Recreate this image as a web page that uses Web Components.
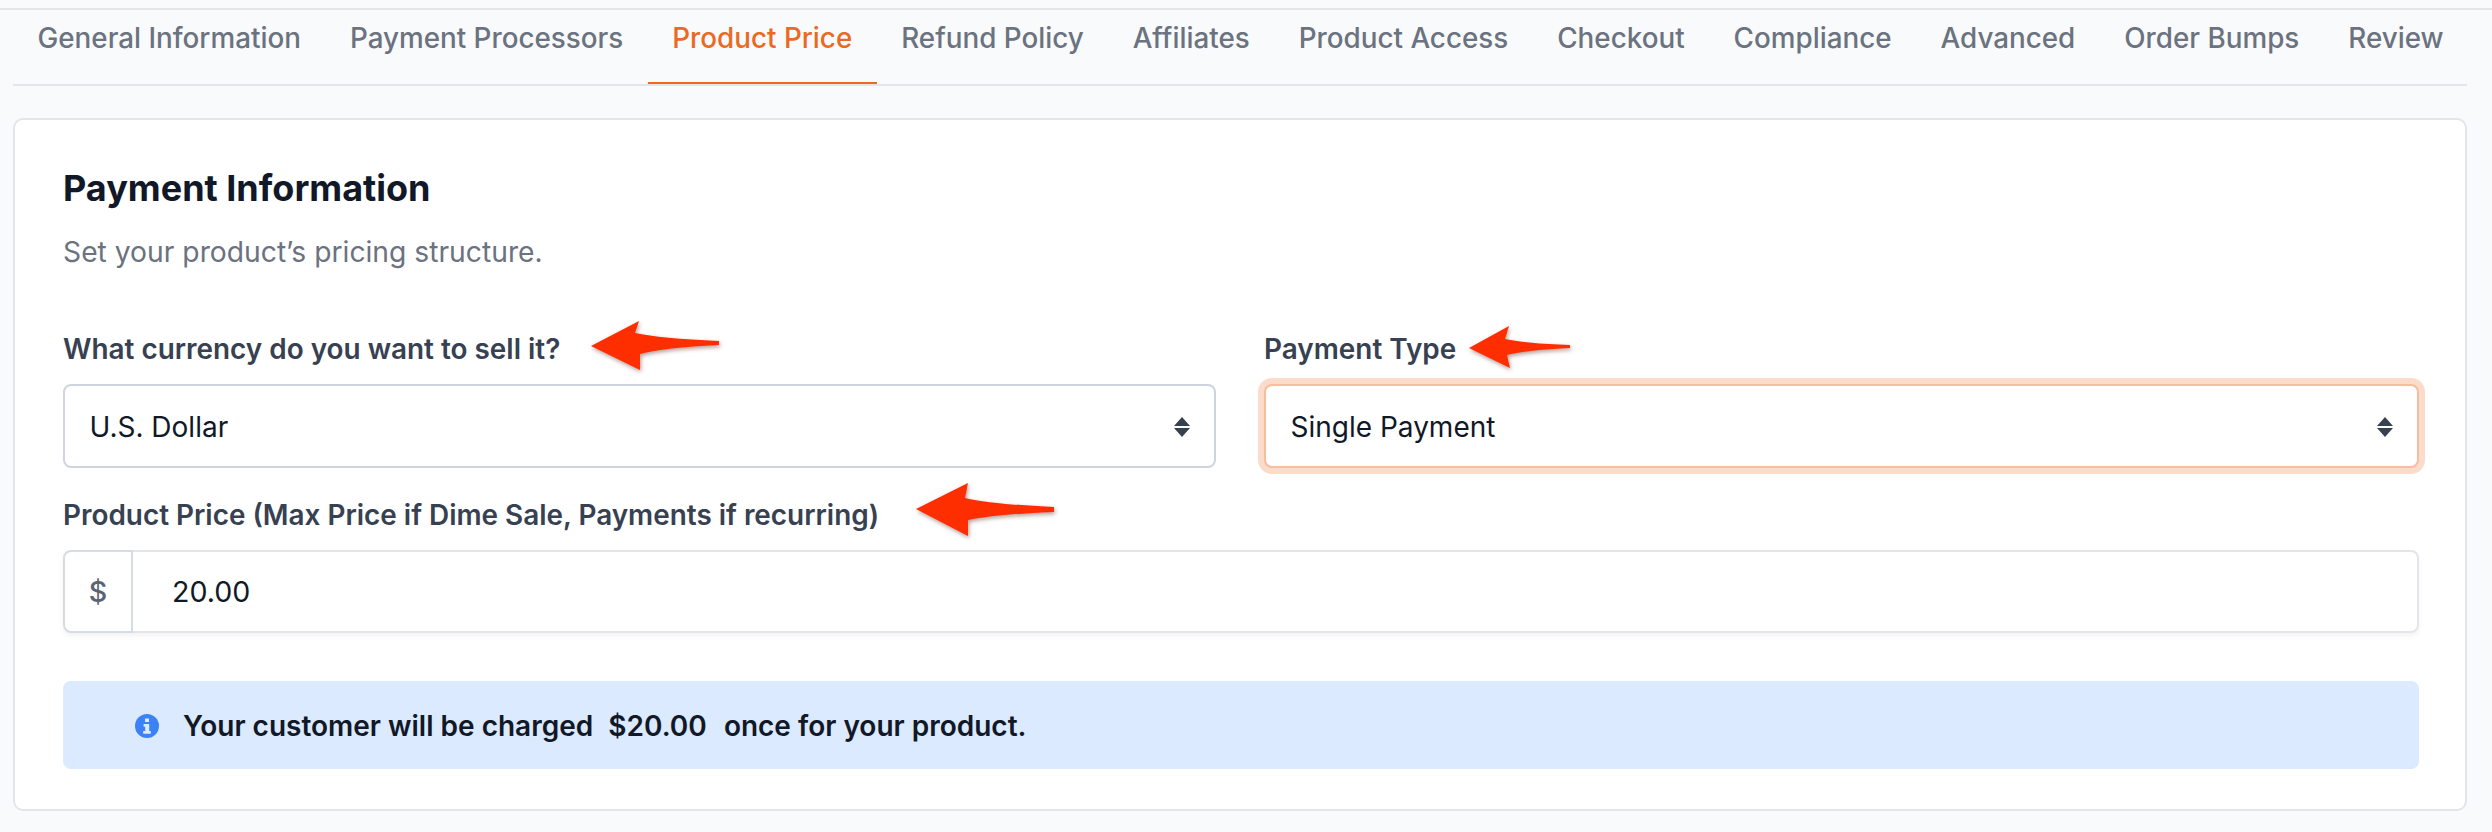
<!DOCTYPE html>
<html>
<head>
<meta charset="utf-8">
<title>Payment Information</title>
<style>
    html, body { margin: 0; background: #f9fafb; }
    body { font-family: Inter, "Liberation Sans", sans-serif; }
    .amount { margin: 0 3px 0 1px; }
</style>
</head>
<body>
<wizard-page>
    <wizard-tabs>
        <wizard-tab>General Information</wizard-tab>
        <wizard-tab>Payment Processors</wizard-tab>
        <wizard-tab active>Product Price</wizard-tab>
        <wizard-tab>Refund Policy</wizard-tab>
        <wizard-tab>Affiliates</wizard-tab>
        <wizard-tab>Product Access</wizard-tab>
        <wizard-tab>Checkout</wizard-tab>
        <wizard-tab>Compliance</wizard-tab>
        <wizard-tab>Advanced</wizard-tab>
        <wizard-tab>Order Bumps</wizard-tab>
        <wizard-tab>Review</wizard-tab>
    </wizard-tabs>
    <form-card heading="Payment Information" sub="Set your product’s pricing structure.">
        <form-field label="What currency do you want to sell it?">
            <select-box>U.S. Dollar</select-box>
        </form-field>
        <form-field label="Payment Type">
            <select-box focused>Single Payment</select-box>
        </form-field>
        <form-field wide label="Product Price (Max Price if Dime Sale, Payments if recurring)">
            <price-input symbol="$" value="20.00"></price-input>
        </form-field>
        <info-alert>Your customer will be charged&nbsp; <span class="amount">$20.00</span>&nbsp; once for your product.</info-alert>
    </form-card>
    <red-arrow tip="591,346" head="639,321 640,370" notch="635,333 640,354" tail="719,341 719,345"></red-arrow>
    <red-arrow tip="1469,348" head="1509,326 1510,368" notch="1505,339 1507,355" tail="1570,345 1570,348"></red-arrow>
    <red-arrow tip="916,509" head="968,483 968,536" notch="965,498 968,520" tail="1054,507 1054,512"></red-arrow>
</wizard-page>

<script>
(function() {
    'use strict';

    // small helper so every element below stays a few lines long
    function define(name, html, setup) {
        customElements.define(name, class extends HTMLElement {
            constructor() {
                super();
                this.attachShadow({mode: 'open'}).innerHTML = html;
            }
            connectedCallback() {
                if (setup) setup.call(this, this.shadowRoot);
            }
        });
    }

    define('wizard-page', `
        <style>
            :host {
                display: block;
                position: relative;
                height: 832px;
                padding-top: 8px;
                box-sizing: border-box;
            }
            .rule {
                height: 2px;
                background: #e3e5ea;
            }
            .inner {
                padding: 0 25px 0 13px;
            }
        </style>
        <div class="rule"></div>
        <div class="inner"><slot></slot></div>
    `);

    define('wizard-tabs', `
        <style>
            :host {
                display: flex;
                height: 76px;
                box-sizing: border-box;
                border-bottom: 2px solid #e3e5ea;
                margin-bottom: 32px;
            }
        </style>
        <slot></slot>
    `);

    define('wizard-tab', `
        <style>
            :host {
                display: block;
                padding: 12px 24.5px 0;
                font-size: 27.8px;
                line-height: 32px;
                font-weight: 500;
                color: #6b7280;
                white-space: nowrap;
                box-sizing: border-box;
            }
            :host([active]) {
                color: #ea6a24;
                height: 74px;
                border-bottom: 2px solid #ea6a24;
            }
        </style>
        <slot></slot>
    `);

    define('form-card', `
        <style>
            :host {
                display: block;
                height: 693px;
                box-sizing: border-box;
                background: #fff;
                border: 2px solid #e3e5ea;
                border-radius: 10px;
                padding: 48px 46px 48px 48px;
            }
            h2 {
                margin: 0;
                font-size: 36px;
                line-height: 40px;
                font-weight: 700;
                color: #111827;
            }
            p {
                margin: 26px 0 0;
                font-size: 28.25px;
                line-height: 36px;
                color: #6b7280;
            }
            .grid {
                margin-top: 64px;
                display: grid;
                grid-template-columns: 1153fr 1155fr;
                column-gap: 48px;
            }
            ::slotted(form-field[wide]), ::slotted(info-alert) {
                grid-column: 1 / -1;
            }
        </style>
        <h2></h2>
        <p></p>
        <div class="grid"><slot></slot></div>
    `, function(root) {
        root.querySelector('h2').textContent = this.getAttribute('heading');
        root.querySelector('p').textContent = this.getAttribute('sub');
    });

    define('form-field', `
        <style>
            :host {
                display: block;
            }
            label {
                display: block;
                font-size: 27.9px;
                line-height: 30px;
                font-weight: 600;
                color: #374151;
                margin-bottom: 20px;
            }
        </style>
        <label></label>
        <slot></slot>
    `, function(root) {
        root.querySelector('label').textContent = this.getAttribute('label');
    });

    define('select-box', `
        <style>
            :host {
                display: flex;
                align-items: center;
                justify-content: space-between;
                height: 84px;
                box-sizing: border-box;
                margin-bottom: 32px;
                padding: 1px 24px 0 24.5px;
                background: #fff;
                border: 2px solid #cfd5de;
                border-radius: 8px;
                font-size: 28px;
                color: #111827;
            }
            :host([focused]) {
                border-color: #f6bd9f;
                box-shadow: 0 0 0 6px #fbdccb;
            }
            svg {
                width: 16px;
                height: 20px;
                fill: #374151;
            }
        </style>
        <span><slot></slot></span>
        <svg viewBox="0 0 16 20"><path d="M8 0l8 9H0zM0 11h16l-8 9z"/></svg>
    `);

    define('price-input', `
        <style>
            :host {
                display: flex;
                height: 83px;
                box-sizing: border-box;
                background: #fff;
                font-size: 28.6px;
                color: #111827;
                border-radius: 8px;
                box-shadow: 0 3px 5px rgba(0,0,0,0.05);
            }
            .symbol {
                width: 70px;
                box-sizing: border-box;
                display: flex;
                align-items: center;
                justify-content: center;
                border: 2px solid #d7dbe2;
                border-radius: 8px 0 0 8px;
                color: #5b6472;
                font-weight: 500;
            }
            .value {
                flex: 1;
                display: flex;
                align-items: center;
                padding-left: 39px;
                border: 2px solid #e3e5ea;
                border-left: 0;
                border-radius: 0 8px 8px 0;
            }
        </style>
        <div class="symbol"></div>
        <div class="value"></div>
    `, function(root) {
        root.querySelector('.symbol').textContent = this.getAttribute('symbol');
        root.querySelector('.value').textContent = this.getAttribute('value');
    });

    define('info-alert', `
        <style>
            :host {
                display: flex;
                align-items: center;
                gap: 24px;
                height: 88px;
                box-sizing: border-box;
                margin-top: 48px;
                padding: 1px 0 0 72px;
                background: #dbeafe;
                border-radius: 8px;
                font-size: 28px;
                font-weight: 600;
                color: #111827;
            }
            svg {
                width: 24px;
                height: 24px;
                flex: none;
            }
        </style>
        <svg viewBox="0 0 24 24">
            <circle cx="12" cy="12" r="12" fill="#3b82f6"/>
            <path fill="#dbeafe" d="M10 4.5h4v3.6h-4zM8.6 10h5.6v7h1.6v2.8H8.2V17h2v-4.2H8.6z"/>
        </svg>
        <span><slot></slot></span>
    `);

    // hand drawn annotation arrow, sits on top of the form at page coordinates
    define('red-arrow', `
        <style>
            :host {
                position: absolute;
                left: 0;
                top: 0;
                pointer-events: none;
            }
            svg {
                display: block;
                overflow: visible;
                filter: drop-shadow(1px 2px 2px rgba(90,30,20,0.45));
            }
        </style>
        <svg width="1" height="1"><path fill="#ff2e00"></path></svg>
    `, function(root) {
        let pts = function(name) {
            return this.getAttribute(name).split(' ').map(function(p) { return p.replace(',', ' '); });
        }.bind(this);
        let tip = pts('tip')[0], head = pts('head'), notch = pts('notch'), tail = pts('tail');
        let mid = function(a, b) {
            let p = a.split(' ').map(Number), q = b.split(' ').map(Number);
            return (p[0] * 0.7 + q[0] * 0.3) + ' ' + (p[1] * 0.3 + q[1] * 0.7);
        };
        root.querySelector('path').setAttribute('d',
            'M' + tip + ' L' + head[0] + ' L' + notch[0] +
            ' Q' + mid(notch[0], tail[0]) + ' ' + tail[0] +
            ' L' + tail[1] +
            ' Q' + mid(notch[1], tail[1]) + ' ' + notch[1] +
            ' L' + head[1] + ' Z');
    });
})();
</script>
</body>
</html>
